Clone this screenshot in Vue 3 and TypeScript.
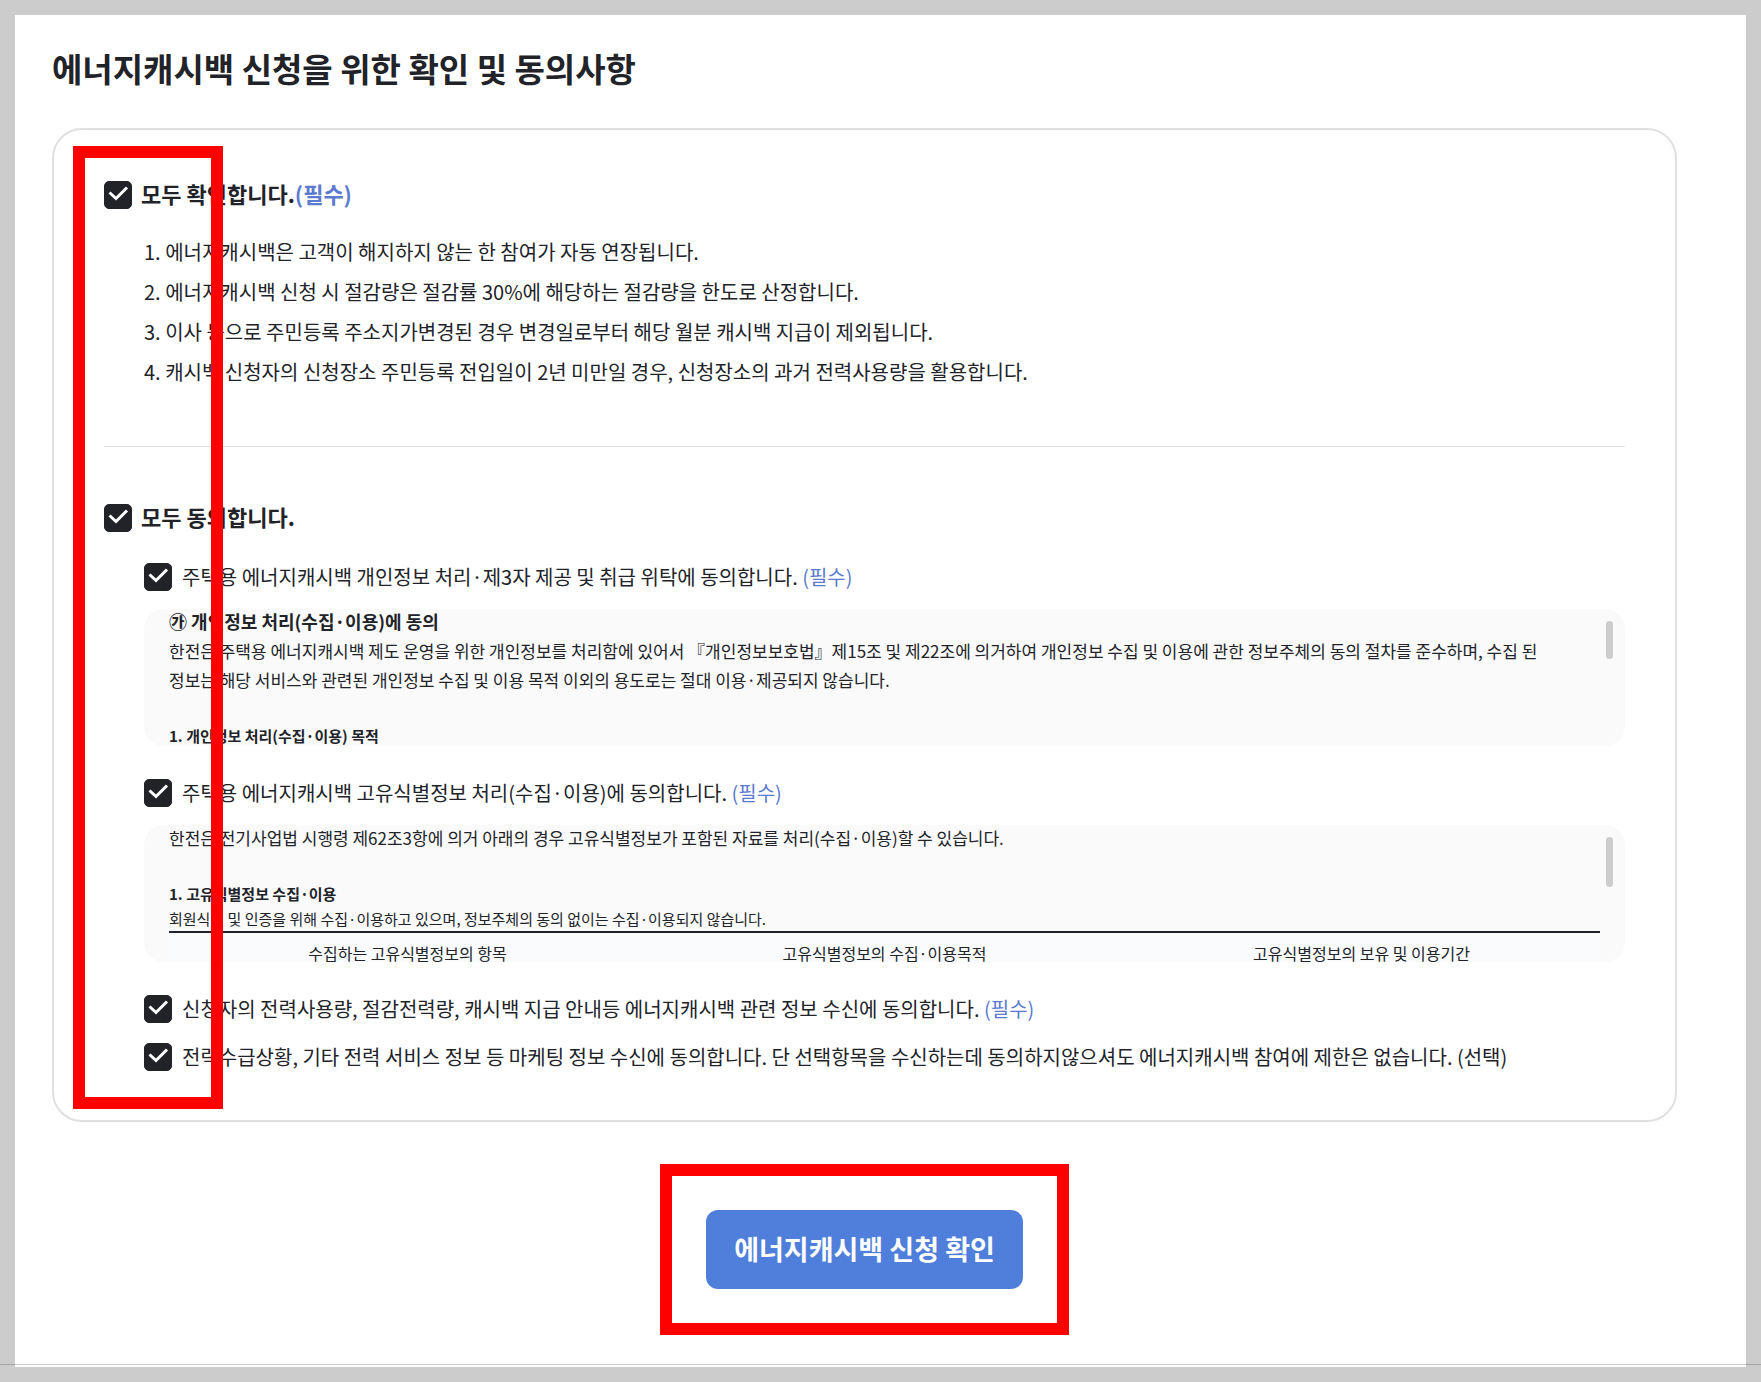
<script setup lang="ts">
import { computed, reactive, ref } from 'vue'

const notices: string[] = [
  '1. 에너지캐시백은 고객이 해지하지 않는 한 참여가 자동 연장됩니다.',
  '2. 에너지캐시백 신청 시 절감량은 절감률 30%에 해당하는 절감량을 한도로 산정합니다.',
  '3. 이사 등으로 주민등록 주소지가변경된 경우 변경일로부터 해당 월분 캐시백 지급이 제외됩니다.',
  '4. 캐시백 신청자의 신청장소 주민등록 전입일이 2년 미만일 경우, 신청장소의 과거 전력사용량을 활용합니다.',
]

const columns: string[] = [
  '수집하는 고유식별정보의 항목',
  '고유식별정보의 수집·이용목적',
  '고유식별정보의 보유 및 이용기간',
]

const confirmed = ref(true)
const agreed = reactive({ privacy: true, identity: true, usage: true, marketing: true })

const allAgreed = computed<boolean>({
  get: () => Object.values(agreed).every(Boolean),
  set: (value) => {
    agreed.privacy = agreed.identity = agreed.usage = agreed.marketing = value
  },
})
</script>

<template>
  <main class="page">
    <h1 class="title">에너지캐시백 신청을 위한 확인 및 동의사항</h1>

    <form class="form" @submit.prevent>
      <div class="card">
        <section class="confirm">
          <label class="row row-main">
            <input v-model="confirmed" class="check" type="checkbox" />
            <span class="row-text">모두 확인합니다.<span class="required">(필수)</span></span>
          </label>
          <ul class="notices">
            <li v-for="notice in notices" :key="notice">{{ notice }}</li>
          </ul>
        </section>

        <section class="agree">
          <label class="row row-main">
            <input v-model="allAgreed" class="check" type="checkbox" />
            <span class="row-text">모두 동의합니다.</span>
          </label>

          <div class="items">
            <label class="row">
              <input v-model="agreed.privacy" class="check" type="checkbox" />
              <span>주택용 에너지캐시백 개인정보 처리·제3자 제공 및 취급 위탁에 동의합니다. <span class="required">(필수)</span></span>
            </label>
            <div class="terms">
              <p class="terms-title">㉮ 개인정보 처리(수집·이용)에 동의</p>
              <p>
                한전은 주택용 에너지캐시백 제도 운영을 위한 개인정보를 처리함에 있어서 『개인정보보호법』제15조 및 제22조에 의거하여 개인정보 수집 및 이용에 관한 정보주체의 동의 절차를 준수하며, 수집 된<br />
                정보는 해당 서비스와 관련된 개인정보 수집 및 이용 목적 이외의 용도로는 절대 이용·제공되지 않습니다.
              </p>
              <p class="small strong">1. 개인정보 처리(수집·이용) 목적</p>
              <span class="thumb"></span>
            </div>

            <label class="row">
              <input v-model="agreed.identity" class="check" type="checkbox" />
              <span>주택용 에너지캐시백 고유식별정보 처리(수집·이용)에 동의합니다. <span class="required">(필수)</span></span>
            </label>
            <div class="terms">
              <p>한전은 전기사업법 시행령 제62조3항에 의거 아래의 경우 고유식별정보가 포함된 자료를 처리(수집·이용)할 수 있습니다.</p>
              <p class="small strong">1. 고유식별정보 수집·이용</p>
              <p class="small follow">회원식별 및 인증을 위해 수집·이용하고 있으며, 정보주체의 동의 없이는 수집·이용되지 않습니다.</p>
              <table class="table">
                <thead>
                  <tr>
                    <th v-for="column in columns" :key="column" scope="col">{{ column }}</th>
                  </tr>
                </thead>
              </table>
              <span class="thumb thumb-long"></span>
            </div>

            <label class="row">
              <input v-model="agreed.usage" class="check" type="checkbox" />
              <span>신청자의 전력사용량, 절감전력량, 캐시백 지급 안내등 에너지캐시백 관련 정보 수신에 동의합니다. <span class="required">(필수)</span></span>
            </label>
            <label class="row row-last">
              <input v-model="agreed.marketing" class="check" type="checkbox" />
              <span>전력수급상황, 기타 전력 서비스 정보 등 마케팅 정보 수신에 동의합니다. 단 선택항목을 수신하는데 동의하지않으셔도 에너지캐시백 참여에 제한은 없습니다. (선택)</span>
            </label>
          </div>
        </section>

        <div class="highlight"></div>
      </div>

      <div class="submit-frame">
        <button class="submit" type="submit">에너지캐시백 신청 확인</button>
      </div>
    </form>
  </main>
</template>

<style>
body {
  margin: 0;
}
</style>

<style scoped>
.page {
  position: relative;
  box-sizing: border-box;
  min-height: 100vh;
  padding: 29px 69px 32px 37px;
  border: 15px solid #ccc;
  background: #fff;
  color: #212329;
  font-family: "Noto Sans CJK KR", sans-serif;
  font-size: 20px;
}

/* hairline that runs across the sheet and its grey surround */
.page::after {
  content: "";
  position: absolute;
  right: -15px;
  bottom: 2px;
  left: -15px;
  height: 1px;
  background: rgba(0, 0, 0, 0.2);
}

.title {
  margin: 0 0 36px;
  font-size: 33px;
  font-weight: 700;
  line-height: 48px;
}

.form {
  display: flex;
  flex-direction: column;
  align-items: center;
}

.card {
  position: relative;
  box-sizing: border-box;
  width: 100%;
  padding: 51px 50px 49px;
  border: 2px solid #dfe1e1;
  border-radius: 30px;
}

.row {
  display: flex;
  align-items: center;
  gap: 10px;
  line-height: 28px;
}

.row-main {
  gap: 9px;
  font-size: 22px;
  font-weight: 700;
  line-height: 25px;
}

.row-text {
  padding-bottom: 3px;
}

.required {
  color: #5b7bd0;
}

.check {
  flex: none;
  width: 28px;
  height: 28px;
  margin: 0;
  appearance: none;
  border: 1px solid #212329;
  border-radius: 5px;
  background: #fff;
}

.check:checked {
  background: #212329 url("data:image/svg+xml,%3Csvg xmlns='http://www.w3.org/2000/svg' viewBox='0 0 28 28'%3E%3Cpath d='M5.5 11.5 12 17.5 23 6.5' fill='none' stroke='white' stroke-width='3'/%3E%3C/svg%3E") center / 28px 28px no-repeat;
}

.notices {
  margin: 23px 0 54px;
  padding: 0 0 0 40px;
  list-style: none;
  line-height: 40px;
}

.agree {
  padding-top: 57px;
  border-top: 1px solid #dfe1e1;
}

.items {
  padding: 31px 0 0 40px;
}

.terms {
  position: relative;
  box-sizing: border-box;
  height: 137px;
  margin: 18px 0 33px;
  padding: 0 25px;
  overflow: hidden;
  border-radius: 20px;
  background: #fafafa;
  font-size: 17px;
  line-height: 29px;
}

.terms p {
  margin: 0;
}

.terms p:first-child {
  margin-top: -2px;
}

.terms-title {
  font-size: 18px;
  font-weight: 700;
}

.terms .small {
  margin-top: 29px;
  font-size: 15px;
  line-height: 25px;
}

.terms .follow {
  margin-top: 0;
}

.strong {
  font-weight: 700;
}

.table {
  width: 100%;
  table-layout: fixed;
  border-collapse: collapse;
  border-top: 2px solid #212329;
  background: #f9fbfd;
  font-size: 16px;
}

.table th {
  padding: 8px 0;
  font-weight: 400;
  line-height: 25px;
}

.thumb {
  position: absolute;
  top: 12px;
  right: 12px;
  width: 7px;
  height: 38px;
  border-radius: 4px;
  background: #ccc;
}

.thumb-long {
  height: 50px;
}

.row-last {
  margin-top: 20px;
}

/* red marker around the column of tick boxes */
.highlight {
  position: absolute;
  top: 16px;
  bottom: 11px;
  left: 19px;
  box-sizing: border-box;
  width: 150px;
  border: 12px solid #f00;
  pointer-events: none;
}

.submit-frame {
  margin-top: 42px;
  padding: 34px;
  border: 12px solid #f00;
}

.submit {
  height: 79px;
  padding: 0 28px 3px;
  border: 0;
  border-radius: 12px;
  background: #507fdb;
  color: #fff;
  font-family: inherit;
  font-size: 27px;
  font-weight: 700;
  cursor: pointer;
}
</style>
